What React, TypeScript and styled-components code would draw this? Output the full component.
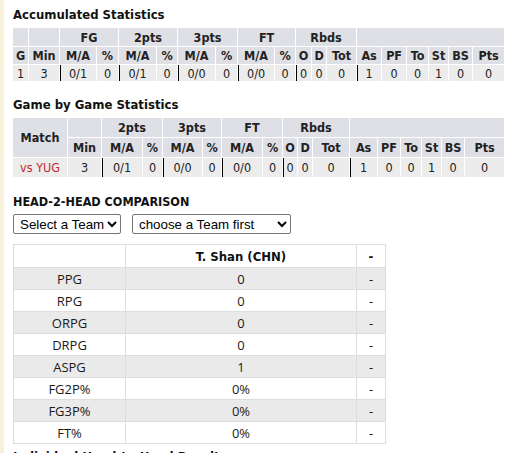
import React from 'react';
import styled, { createGlobalStyle } from 'styled-components';

const GlobalStyle = createGlobalStyle`
  html, body {
    margin: 0;
    padding: 0;
    background: #fff;
  }
`;

const statFont = `"DejaVu Sans Condensed", "DejaVu Sans", Tahoma, sans-serif`;

const Page = styled.div`
  border-left: 4px solid #f6f1d8;
  padding: 0 11px 0 9px;
  min-height: 453px;
  overflow: hidden;
`;

const Title = styled.h3<{ $top?: number }>`
  margin: ${(p) => p.$top ?? 7}px 0 5px;
  font: bold 13px/16px ${statFont};
  color: #111;
`;

const StatTable = styled.table`
  width: 100%;
  border-collapse: separate;
  border-spacing: 0;
  table-layout: fixed;
  font-family: ${statFont};
  font-size: 12.5px;
  color: #222;
`;

const HeadRow = styled.tr<{ $h: number }>`
  height: ${(p) => p.$h}px;
`;

const Th = styled.th`
  background: #dfdfe6;
  font-weight: bold;
  text-align: center;
  padding: 0;
  border-right: 1px solid #fff;
  border-bottom: 1px solid #fff;
  white-space: nowrap;
`;

const Td = styled.td<{ $sep?: boolean }>`
  background: #ececec;
  text-align: center;
  padding: 0;
  border-right: 1px solid #fff;
  white-space: nowrap;
  box-shadow: ${(p) => (p.$sep ? 'inset 1px 0 0 #000' : 'none')};
`;

const MatchLink = styled.a`
  color: #c0282d;
  text-decoration: none;
`;

const Heading = styled.h4`
  margin: 17px 0 4px;
  font: bold 12.5px/16px ${statFont};
  color: #111;
  text-transform: uppercase;
`;

const SelectRow = styled.div`
  display: flex;
  gap: 11px;
  margin-bottom: 10px;
`;

const TeamSelect = styled.select<{ $w: number }>`
  width: ${(p) => p.$w}px;
  height: 20px;
  font: 13.33px "Liberation Sans", Arial, sans-serif;
  color: #000;
  border: 1px solid #767676;
  border-radius: 2px;
  background: #fff;
  padding: 0 0 0 2px;
`;

const CompareTable = styled.table`
  width: 372px;
  border-collapse: collapse;
  table-layout: fixed;
  font-family: "Open Sans", "Noto Sans", sans-serif;
  font-size: 13px;
  color: #1a1a1a;
`;

const CRow = styled.tr<{ $shade?: boolean }>`
  height: 22px;
  background: ${(p) => (p.$shade ? '#eaeaea' : '#fff')};
`;

const CHead = styled.th`
  border: 1px solid #ddd;
  font: bold 13px ${statFont};
  color: #111;
  height: 22px;
  text-align: center;
  padding: 0;
`;

const CCell = styled.td`
  border: 1px solid #ddd;
  text-align: center;
  padding: 0;
`;

const NextTitle = styled.h3`
  margin: 5px 0 0;
  font: bold 13px/16px ${statFont};
  color: #111;
`;

const accWidths = [16, 31, 37, 22, 38, 21, 38, 22, 37, 21, 16, 15, 30, 25, 25, 22, 20, 24, 32];
const gameWidths = [55, 34, 41, 20, 40, 19, 41, 20, 15, 15, 37, 28, 23, 21, 20, 23, 40];

const subHeads = ['M/A', '%', 'M/A', '%', 'M/A', '%', 'O', 'D', 'Tot', 'As', 'PF', 'To', 'St', 'BS', 'Pts'];

type Cell = { v: string; sep?: boolean };

const accData: Cell[] = [
    { v: '1' }, { v: '3' },
    { v: '0/1', sep: true }, { v: '0' },
    { v: '0/1', sep: true }, { v: '0' },
    { v: '0/0', sep: true }, { v: '0' },
    { v: '0/0', sep: true }, { v: '0' },
    { v: '0', sep: true }, { v: '0' }, { v: '0' },
    { v: '1', sep: true }, { v: '0' }, { v: '0' }, { v: '1' }, { v: '0' }, { v: '0' },
];

const gameData: Cell[] = [
    { v: '3' },
    { v: '0/1', sep: true }, { v: '0' },
    { v: '0/0', sep: true }, { v: '0' },
    { v: '0/0', sep: true }, { v: '0' },
    { v: '0', sep: true }, { v: '0' }, { v: '0' },
    { v: '1', sep: true }, { v: '0' }, { v: '0' }, { v: '1' }, { v: '0' }, { v: '0' },
];

const compare = [
    ['PPG', '0'],
    ['RPG', '0'],
    ['ORPG', '0'],
    ['DRPG', '0'],
    ['ASPG', '1'],
    ['FG2P%', '0%'],
    ['FG3P%', '0%'],
    ['FT%', '0%'],
];

const Cols = ({ widths }: { widths: number[] }) => (
    <colgroup>
        {widths.map((w, i) => (
            <col key={i} style={{ width: w }} />
        ))}
    </colgroup>
);

export default function App() {
    return (
        <Page>
            <GlobalStyle />
            <Title>Accumulated Statistics</Title>
            <StatTable>
                <Cols widths={accWidths} />
                <thead>
                    <HeadRow $h={19}>
                        <Th />
                        <Th />
                        <Th colSpan={2}>FG</Th>
                        <Th colSpan={2}>2pts</Th>
                        <Th colSpan={2}>3pts</Th>
                        <Th colSpan={2}>FT</Th>
                        <Th colSpan={3}>Rbds</Th>
                        <Th colSpan={6} />
                    </HeadRow>
                    <HeadRow $h={18}>
                        <Th>G</Th>
                        <Th>Min</Th>
                        <Th>M/A</Th>
                        <Th>%</Th>
                        {subHeads.map((h, i) => (
                            <Th key={i}>{h}</Th>
                        ))}
                    </HeadRow>
                </thead>
                <tbody>
                    <HeadRow $h={16}>
                        {accData.map((c, i) => (
                            <Td key={i} $sep={c.sep}>{c.v}</Td>
                        ))}
                    </HeadRow>
                </tbody>
            </StatTable>

            <Title $top={16}>Game by Game Statistics</Title>
            <StatTable>
                <Cols widths={gameWidths} />
                <thead>
                    <HeadRow $h={20}>
                        <Th rowSpan={2}>Match</Th>
                        <Th />
                        <Th colSpan={2}>2pts</Th>
                        <Th colSpan={2}>3pts</Th>
                        <Th colSpan={2}>FT</Th>
                        <Th colSpan={3}>Rbds</Th>
                        <Th colSpan={6} />
                    </HeadRow>
                    <HeadRow $h={20}>
                        <Th>Min</Th>
                        {subHeads.map((h, i) => (
                            <Th key={i}>{h}</Th>
                        ))}
                    </HeadRow>
                </thead>
                <tbody>
                    <HeadRow $h={19}>
                        <Td>
                            <MatchLink href="#">vs YUG</MatchLink>
                        </Td>
                        {gameData.map((c, i) => (
                            <Td key={i} $sep={c.sep}>{c.v}</Td>
                        ))}
                    </HeadRow>
                </tbody>
            </StatTable>

            <Heading>Head-2-Head Comparison</Heading>
            <SelectRow>
                <TeamSelect $w={108} defaultValue="">
                    <option value="">Select a Team</option>
                </TeamSelect>
                <TeamSelect $w={159} defaultValue="">
                    <option value="">choose a Team first</option>
                </TeamSelect>
            </SelectRow>

            <CompareTable>
                <Cols widths={[112, 231, 29]} />
                <thead>
                    <CRow>
                        <CHead />
                        <CHead>T. Shan (CHN)</CHead>
                        <CHead>-</CHead>
                    </CRow>
                </thead>
                <tbody>
                    {compare.map(([label, val], i) => (
                        <CRow key={label} $shade={i % 2 === 0}>
                            <CCell>{label}</CCell>
                            <CCell>{val}</CCell>
                            <CCell>-</CCell>
                        </CRow>
                    ))}
                </tbody>
            </CompareTable>
            <NextTitle>Individual Head-to-Head Results</NextTitle>
        </Page>
    );
}
